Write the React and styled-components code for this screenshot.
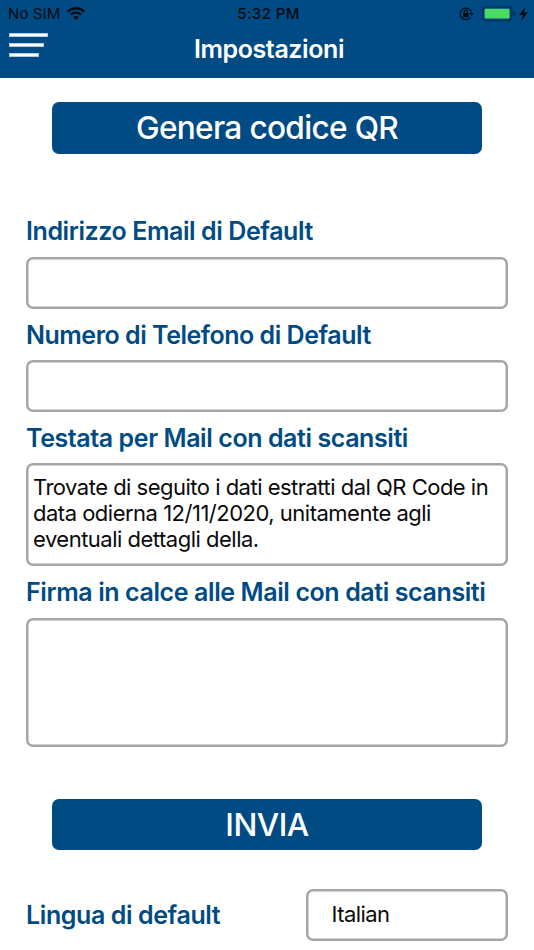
import styled, { createGlobalStyle } from "styled-components";

const App = () => {
	return (
		<>
			<GlobalStyle />
			<Screen>
				<Header>
					<StatusBar>
						<Carrier>
							<span>No SIM</span>
							<WifiIcon />
						</Carrier>
						<Clock>5:32 PM</Clock>
						<StatusIcons>
							<LockIcon />
							<BatteryIcon />
							<BoltIcon />
						</StatusIcons>
					</StatusBar>
					<NavBar>
						<MenuButton aria-label="Menu">
							<MenuLine $width="39px" />
							<MenuLine $width="35px" />
							<MenuLine $width="30px" />
						</MenuButton>
						<Title>Impostazioni</Title>
					</NavBar>
				</Header>
				<Content>
					<Button $spacing="-0.68px">Genera codice QR</Button>
					<Form>
						<Field>
							<Label $spacing="-0.42px">Indirizzo Email di Default</Label>
							<Input />
						</Field>
						<Field>
							<Label $spacing="-0.48px">Numero di Telefono di Default</Label>
							<Input />
						</Field>
						<Field>
							<Label $spacing="-0.42px">Testata per Mail con dati scansiti</Label>
							<TextBox $height="103px">
								<Line $spacing="-0.51px">
									Trovate di seguito i dati estratti dal QR Code in
								</Line>
								<Line $spacing="-0.5px">
									data odierna 12/11/2020, unitamente agli
								</Line>
								<Line $spacing="-0.5px">eventuali dettagli della.</Line>
							</TextBox>
						</Field>
						<Field>
							<Label $spacing="-0.4px">
								Firma in calce alle Mail con dati scansiti
							</Label>
							<TextBox $height="128.6px" />
						</Field>
					</Form>
					<Button $spacing="-0.5px">INVIA</Button>
					<LanguageRow>
						<Label $spacing="-0.4px">Lingua di default</Label>
						<Select>Italian</Select>
					</LanguageRow>
				</Content>
			</Screen>
		</>
	);
};

const WifiIcon = () => (
	<svg width="18" height="13" viewBox="0 0 18 13" fill="none" stroke="#020a12">
		<path d="M0.9 4.5C5.5 0.3 12.5 0.3 17.1 4.5" strokeWidth="2.5" />
		<path d="M3.9 7.6C6.9 5 11.1 5 14.1 7.6" strokeWidth="2.3" />
		<path d="M9 13L6.1 10.1C7.7 8.7 10.3 8.7 11.9 10.1Z" fill="#020a12" stroke="none" />
	</svg>
);

const LockIcon = () => (
	<svg width="15" height="14" viewBox="0 0 15 14" fill="none" stroke="#020a12">
		<path d="M11.4 10.6A5.8 5.8 0 1 1 12.5 5.4" strokeWidth="1.2" />
		<path d="M10.4 6.1H14.6L12.5 9Z" fill="#020a12" stroke="none" />
		<rect x="4" y="6" width="5.6" height="4.2" rx="0.5" fill="#020a12" stroke="none" />
		<path d="M5.2 6.2V4.8a1.6 1.6 0 0 1 3.2 0V6.2" strokeWidth="1.1" />
	</svg>
);

const BatteryIcon = () => (
	<svg width="34" height="16" viewBox="0 0 34 16">
		<rect x="0.8" y="0.9" width="28.8" height="13.6" rx="3.4" fill="none" stroke="#03305a" strokeWidth="1.5" />
		<rect x="2.7" y="2.8" width="24.8" height="9.8" rx="1" fill="#4cd964" />
		<path d="M31.3 5.2C34 6.2 34 9 31.3 10Z" fill="#03305a" />
	</svg>
);

const BoltIcon = () => (
	<svg width="9" height="14" viewBox="0 0 9 14">
		<path d="M6.2 0L0.2 7.9H3.8L2.2 14L8.8 5.4H5Z" fill="#020a12" />
	</svg>
);

const GlobalStyle = createGlobalStyle`
	* {
		box-sizing: border-box;
	}

	body {
		margin: 0;
		background-color: #fff;
		font-family: Inter, "Liberation Sans", sans-serif;
	}
`;

const Screen = styled.div`
	width: 534px;
	height: 950px;
	overflow: hidden;
	background-color: #fff;
`;

const Header = styled.header`
	height: 77.5px;
	background-color: #004b83;
`;

const StatusBar = styled.div`
	display: grid;
	grid-template-columns: 1fr auto 1fr;
	align-items: center;
	height: 27px;
	padding: 0 6px 0 8px;
	color: #020a12;
	font-size: 15px;
	line-height: 18px;
`;

const Carrier = styled.div`
	display: flex;
	align-items: center;
	gap: 7px;
	letter-spacing: 0.1px;
`;

const Clock = styled.div`
	padding-left: 1px;
	font-weight: 500;
	letter-spacing: 0.4px;
`;

const StatusIcons = styled.div`
	display: flex;
	align-items: center;
	justify-content: flex-end;

	svg:nth-child(2) {
		margin: 0 3px 0 8px;
	}
`;

const NavBar = styled.div`
	display: grid;
	grid-template-columns: 1fr auto 1fr;
	padding: 5px 9px 0;
`;

const MenuButton = styled.button`
	display: flex;
	flex-direction: column;
	align-items: flex-start;
	justify-content: flex-start;
	gap: 6px;
	padding: 1px 0 0;
	border: 0;
	background: none;
`;

const MenuLine = styled.span`
	width: ${({ $width }) => $width};
	height: 4px;
	border: 0.5px solid #b6cbdb;
	background-color: #fff;
`;

const Title = styled.h1`
	margin: 1px 0 0 4px;
	color: #fff;
	font-size: 25px;
	font-weight: 600;
	line-height: 32px;
	letter-spacing: -0.4px;
`;

const Content = styled.main`
	display: flex;
	flex-direction: column;
	padding: 24.5px 26px 0;
`;

const Button = styled.button`
	height: 51.6px;
	margin: 0 26px;
	padding: 0;
	border: 0;
	border-radius: 7px;
	background-color: #004b83;
	color: #fff;
	font-family: inherit;
	font-size: 31.6px;
	font-weight: 550;
	line-height: 52.4px;
	letter-spacing: ${({ $spacing }) => $spacing};
`;

const Form = styled.div`
	margin: 51.8px 0 52px;
`;

const Field = styled.div`
	display: flex;
	flex-direction: column;
`;

const Label = styled.label`
	height: 51.6px;
	color: #004b83;
	font-size: 25px;
	font-weight: 600;
	line-height: 53px;
	letter-spacing: ${({ $spacing }) => $spacing};
	white-space: nowrap;
`;

const Input = styled.input`
	width: 100%;
	height: 51.6px;
	padding: 0 7px;
	border: 0;
	border-radius: 7px;
	box-shadow: inset 0 0 0 2.5px #a6a6a6;
	background-color: #fff;
	font: inherit;
	outline: none;
`;

const TextBox = styled.div`
	height: ${({ $height }) => $height};
	padding: 10.5px 7px;
	border-radius: 7px;
	box-shadow: inset 0 0 0 2.5px #a6a6a6;
	color: #0a0a0a;
`;

const Line = styled.div`
	font-size: 22px;
	line-height: 26px;
	letter-spacing: ${({ $spacing }) => $spacing};
	white-space: nowrap;
`;

const LanguageRow = styled.div`
	display: flex;
	justify-content: space-between;
	margin-top: 39px;
`;

const Select = styled.div`
	width: 202.5px;
	height: 51.6px;
	padding-left: 26px;
	border-radius: 7px;
	box-shadow: inset 0 0 0 2.5px #a6a6a6;
	color: #0a0a0a;
	font-size: 22px;
	line-height: 50px;
	letter-spacing: -0.55px;
`;

export default App;
